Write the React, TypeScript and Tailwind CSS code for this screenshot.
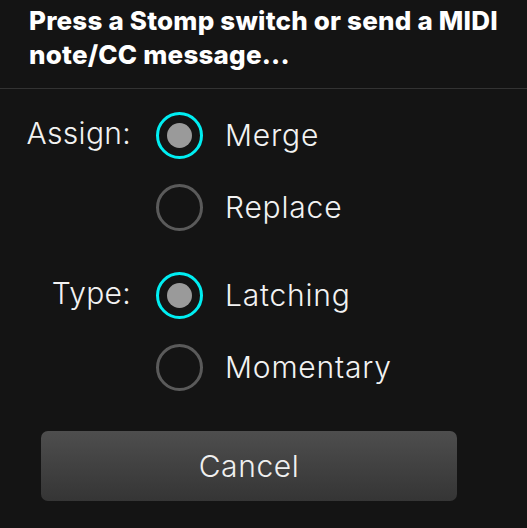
import React, { useState } from 'react';

type Option = { label: string; value: string };

const groups: { name: string; options: Option[]; initial: string }[] = [
  {
    name: 'Assign:',
    options: [
      { label: 'Merge', value: 'merge' },
      { label: 'Replace', value: 'replace' },
    ],
    initial: 'merge',
  },
  {
    name: 'Type:',
    options: [
      { label: 'Latching', value: 'latching' },
      { label: 'Momentary', value: 'momentary' },
    ],
    initial: 'latching',
  },
];

const Radio = ({ checked }: { checked: boolean }) => (
  <div
    className={
      checked
        ? 'w-[47px] h-[47px] rounded-full border-[3px] border-[#00eef2] flex items-center justify-center shrink-0'
        : 'w-[47px] h-[47px] rounded-full border-[3px] border-[#5a5a5a] flex items-center justify-center shrink-0'
    }
  >
    {checked && <div className="w-[25px] h-[25px] rounded-full bg-[#9a9a9a]" />}
  </div>
);

const RadioGroup = ({ name, options, initial }: { name: string; options: Option[]; initial: string }) => {
  const [value, setValue] = useState(initial);

  return (
    <div className="flex">
      <div className="w-[131px] h-[72px] flex items-center justify-end pb-[3px] text-[30px] font-light tracking-[0.3px] text-[#f2f2f2]">
        {name}
      </div>
      <div className="flex flex-col ml-[25px]">
        {options.map((opt) => (
          <button
            key={opt.value}
            onClick={() => setValue(opt.value)}
            className="h-[72px] flex items-center gap-[22px] text-[30px] font-light tracking-[0.8px] text-[#f2f2f2] cursor-pointer"
          >
            <Radio checked={value === opt.value} />
            <span>{opt.label}</span>
          </button>
        ))}
      </div>
    </div>
  );
};

const App = () => {
  return (
    <div
      className="w-[527px] h-[528px] bg-[#141414] overflow-hidden"
      style={{ fontFamily: 'Inter, "Noto Sans", sans-serif' }}
    >
      <div className="border-b border-[#333333] px-[29px] pt-[4px] pb-[16px]">
        <h1 className="text-[26px] leading-[34px] font-extrabold text-white tracking-[0.2px]">
          Press a Stomp switch or send a MIDI note/CC message...
        </h1>
      </div>

      <div className="pt-[10px] flex flex-col gap-[16px]">
        {groups.map((g) => (
          <RadioGroup key={g.name} name={g.name} options={g.options} initial={g.initial} />
        ))}
      </div>

      <div className="px-[41px] pt-[28px]">
        <button className="w-[416px] h-[70px] rounded-[7px] bg-gradient-to-b from-[#4e4e4e] to-[#353535] text-[30px] font-light tracking-[0.6px] text-[#f0f0f0] flex items-center justify-center cursor-pointer">
          Cancel
        </button>
      </div>
    </div>
  );
};

export default App;
